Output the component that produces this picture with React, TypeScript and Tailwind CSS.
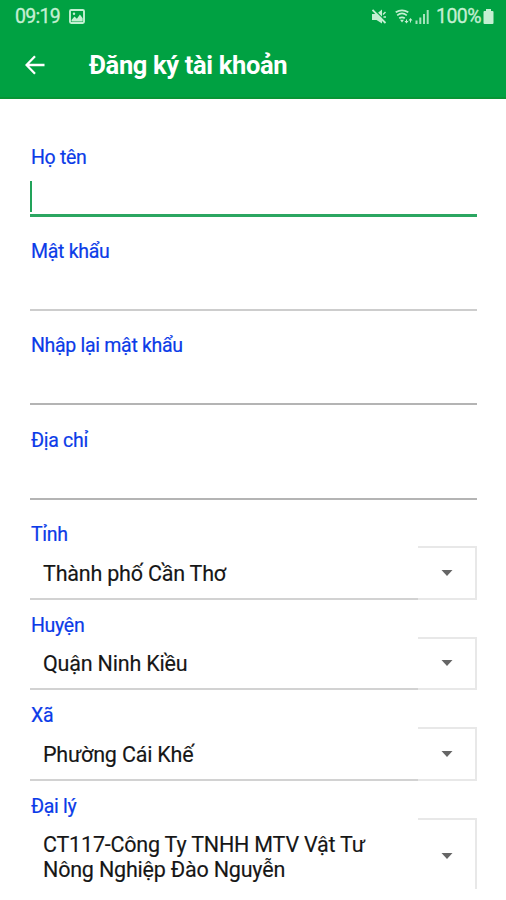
type FieldProps = { label: string; focused?: boolean; dark?: boolean };

function Label({ children }: { children: string }) {
  return (
    <label className="block h-6 whitespace-nowrap pl-px pt-px text-[19.5px] leading-6 tracking-[-0.3px] text-[#0b3be8] [-webkit-text-stroke:0.2px_#0b3be8]">
      {children}
    </label>
  );
}

function Field({ label, focused = false, dark = false }: FieldProps) {
  const line = focused
    ? "border-b-[3px] border-[#2ba661]"
    : dark
      ? "border-b-2 border-[#b4b4b4]"
      : "border-b-2 border-[#cdcdcd]";
  return (
    <div className={focused ? "pt-[22px]" : "pt-[22.2px]"}>
      <Label>{label}</Label>
      <div className={`h-12 pt-3 ${line}`}>
        {focused && <div className="h-[31px] w-[2px] bg-[#22a35a]" />}
      </div>
    </div>
  );
}

function Arrow() {
  return (
    <svg className="ml-[23px] h-[6px] w-3" viewBox="0 0 12 6">
      <path d="M0.5 0h11L6 6z" fill="#666" />
    </svg>
  );
}

type SelectProps = { label: string; lines: string[]; className: string; box: string; open?: boolean };

function Select({ label, lines, className, box, open = false }: SelectProps) {
  return (
    <div className={className}>
      <Label>{label}</Label>
      <div className={`flex w-[447px] ${box}`}>
        <div
          className={`flex w-[388px] flex-col justify-center pl-[13px] text-[21.5px] leading-[25px] tracking-[-0.2px] text-[#161616] [-webkit-text-stroke:0.15px_#161616] ${
            open ? "pt-[7px]" : "border-b-2 border-[#d2d2d2] pt-[3px]"
          }`}
        >
          {lines.map((line) => (
            <span key={line} className="whitespace-nowrap">{line}</span>
          ))}
        </div>
        <div
          className={`flex flex-1 items-center border-t-2 border-r-2 border-[#e8e8e8] ${open ? "pt-1" : "border-b-2"}`}
        >
          <Arrow />
        </div>
      </div>
    </div>
  );
}

function StatusBar() {
  return (
    <div className="flex h-8 items-center pl-[15px] pr-3 pt-px text-[19.5px] leading-8 tracking-[-0.7px] text-[#c4efd2] [-webkit-text-stroke:0.3px_#c4efd2]">
      <span className="w-[54px] whitespace-nowrap">09:19</span>
      <svg className="h-4 w-4" viewBox="0 0 16 16">
        <rect x="1" y="1" width="14" height="13" rx="1.2" fill="none" stroke="currentColor" strokeWidth="1.9" />
        <path d="M2.5 12.5v-1.5l3-3.5 2.4 2.2 3-4.2 2.8 3.8v3.2z" fill="currentColor" />
        <circle cx="5" cy="4.8" r="1.2" fill="currentColor" />
      </svg>
      <svg className="ml-auto h-4 w-4" viewBox="0 0 16 16">
        <path d="M0 5h4.5l5.5-4.5v14L4.5 11H0z" fill="currentColor" />
        <path d="M2 0.5l12.5 12.5" stroke="#00a142" strokeWidth="1.2" />
        <path d="M0.5 1l13 13" stroke="currentColor" strokeWidth="1.8" />
        <path d="M11 5.5l2.5-2.5M11.5 8h2.5" stroke="currentColor" strokeWidth="1.5" />
      </svg>
      <svg className="ml-[7px] h-4 w-[18px]" viewBox="0 0 18 16">
        <path d="M0.7 3.2q6.3-3.8 12.6 0M2.2 6.3q4.8-3.8 9.6 0M4.2 9.3q2.8-2 5.6 0" fill="none" stroke="currentColor" strokeWidth="1.7" />
        <path d="M5 10.8h4L7 13.5z" fill="currentColor" />
        <path d="M9.5 12h4l-2 2.5zM13.5 11.5h4l-2-2.5z" fill="currentColor" />
        <path d="M11.5 10.5v2M15.5 11v2.5" stroke="currentColor" strokeWidth="1" />
      </svg>
      <svg className="ml-[2px] h-4 w-[15px]" viewBox="0 0 15 16">
        <path d="M1.5 11.5V15M5.3 8.5V15M9 5V15M12.7 1V15" stroke="currentColor" strokeWidth="2" opacity=".85" />
      </svg>
      <span className="ml-[6px] w-[46px] whitespace-nowrap tracking-[-0.55px]">100%</span>
      <svg className="ml-px h-[15px] w-[11px]" viewBox="0 0 11 15">
        <path d="M3 0h5v2h1.5q1 0 1 1v11q0 1-1 1H1.5q-1 0-1-1V3q0-1 1-1H3z" fill="currentColor" />
      </svg>
    </div>
  );
}

export default function App() {
  return (
    <main className="h-[900px] w-[506px] overflow-hidden bg-white font-['Roboto',sans-serif]">
      <header className="h-[98.5px] border-b-2 border-[#079535] bg-[#00a142]">
        <StatusBar />
        <div className="flex h-[66px] items-center pl-[25px] text-white">
          <svg className="h-5 w-5" viewBox="0 0 20 20">
            <path d="M19.5 10H2M10 1.2L1.5 10l8.5 8.8" fill="none" stroke="currentColor" strokeWidth="2.3" />
          </svg>
          <h1 className="ml-[44px] whitespace-nowrap pt-px text-[25.5px] font-bold tracking-[-0.35px]">Đăng ký tài khoản</h1>
        </div>
      </header>
      <form className="pl-[30px] pr-[29px] pt-[24.5px]">
        <Field label="Họ tên" focused />
        <Field label="Mật khẩu" />
        <Field label="Nhập lại mật khẩu" dark />
        <Field label="Địa chỉ" dark />
        <Select label="Tỉnh" lines={["Thành phố Cần Thơ"]} className="pt-[22px]" box="h-[54px]" />
        <Select label="Huyện" lines={["Quận Ninh Kiều"]} className="pt-[13px]" box="h-[53px]" />
        <Select label="Xã" lines={["Phường Cái Khế"]} className="pt-[13px]" box="h-[54px]" />
        <Select
          label="Đại lý"
          lines={["CT117-Công Ty TNHH MTV Vật Tư", "Nông Nghiệp Đào Nguyễn"]}
          className="pt-[13px]"
          box="h-[71px]"
          open
        />
      </form>
    </main>
  );
}
